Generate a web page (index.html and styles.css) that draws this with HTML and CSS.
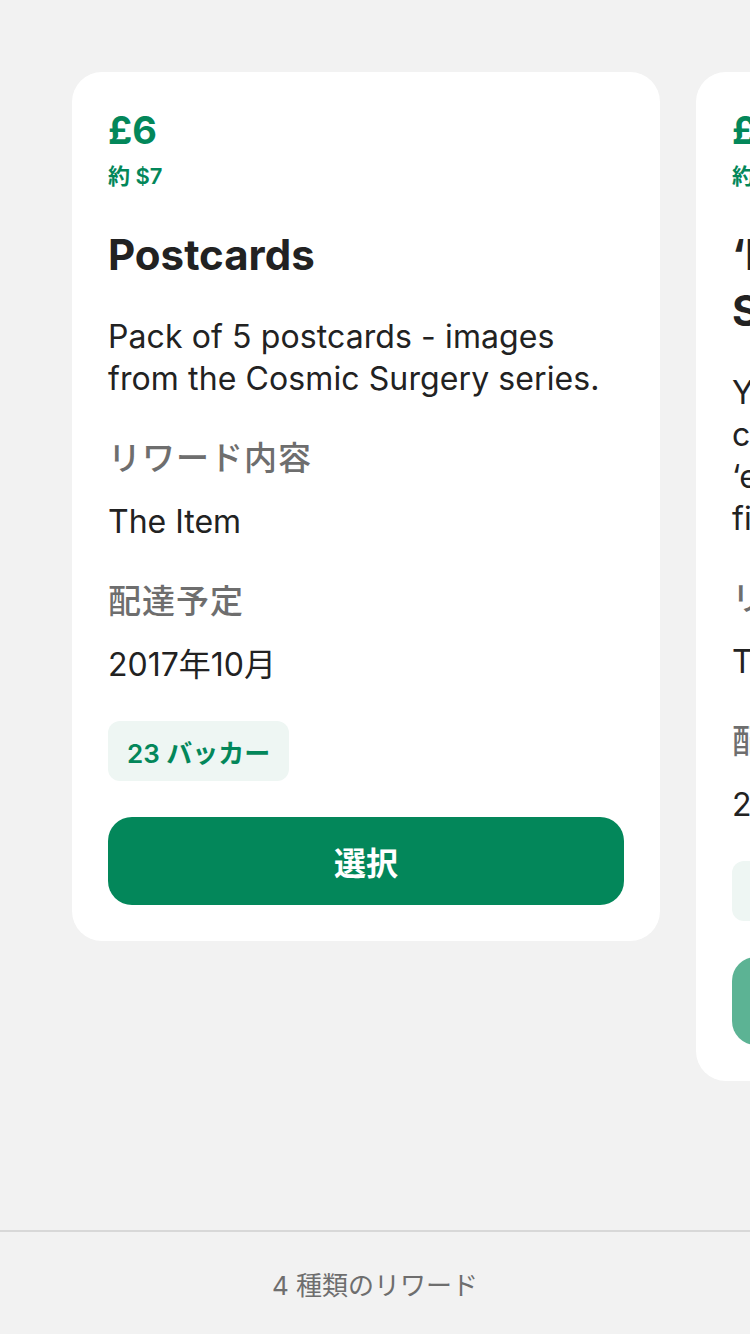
FILE: index.html
```html
<!DOCTYPE html>
<html lang="ja">
<head>
<meta charset="utf-8">
<title>Rewards</title>
<link rel="stylesheet" href="styles.css">
</head>
<body>
<main class="carousel">
  <section class="card">
    <div class="price">£6</div>
    <div class="approx">約 $7</div>
    <h2 class="title">Postcards</h2>
    <p class="desc">Pack of 5 postcards - images from the Cosmic Surgery series.</p>
    <div class="block">
      <div class="label">リワード内容</div>
      <div class="value">The Item</div>
    </div>
    <div class="block">
      <div class="label">配達予定</div>
      <div class="value">2017年10月</div>
    </div>
    <div class="badge">23 バッカー</div>
    <button class="select">選択</button>
  </section>
  <section class="card">
    <div class="price">£25</div>
    <div class="approx">約 $31</div>
    <h2 class="title">‘Inner Space’ Art Print Signed Set</h2>
    <p class="desc">You will get a signed book, a complete postcard pack and our ‘extra special’ thank you on the final page.</p>
    <div class="block">
      <div class="label">リワード内容</div>
      <div class="value">The Item</div>
    </div>
    <div class="block">
      <div class="label">配達予定</div>
      <div class="value">2017年10月</div>
    </div>
    <div class="badge">12 バッカー</div>
    <button class="select disabled">選択</button>
  </section>
</main>
<footer class="footer">4 種類のリワード</footer>
</body>
</html>
```
FILE: styles.css
```css
* { box-sizing: border-box; }
html, body { margin: 0; padding: 0; }
body {
  width: 750px;
  height: 1334px;
  overflow: hidden;
  background: #f2f2f2;
  font-family: Inter, "Noto Sans CJK JP", sans-serif;
  color: #222222;
  display: flex;
  flex-direction: column;
}
.carousel {
  flex: 1;
  display: flex;
  align-items: flex-start;
  gap: 36px;
  padding: 72px 0 0 72px;
  overflow: hidden;
}
.card {
  flex: none;
  width: 588px;
  background: #ffffff;
  border-radius: 30px;
  padding: 36px;
  display: flex;
  flex-direction: column;
  align-items: flex-start;
}
.price {
  font-size: 38px;
  line-height: 44px;
  font-weight: 700;
  color: #03875a;
}
.approx {
  margin-top: 10px;
  font-size: 22px;
  line-height: 28px;
  font-weight: 600;
  color: #03875a;
}
.title {
  margin: 37px 0 0;
  font-size: 42px;
  line-height: 56px;
  font-weight: 700;
  color: #222222;
}
.desc {
  margin: 33px 0 0;
  font-size: 32px;
  line-height: 42px;
  letter-spacing: 0.1px;
}
.block { margin-top: 37px; }
.label {
  font-size: 33px;
  line-height: 42px;
  font-weight: 500;
  letter-spacing: 1px;
  color: #6e6e6e;
}
.value {
  margin-top: 22px;
  font-size: 32px;
  line-height: 42px;
}
.badge {
  margin-top: 35px;
  height: 60px;
  padding: 0 19px;
  display: flex;
  align-items: center;
  background: #eef6f3;
  border-radius: 12px;
  font-size: 26px;
  font-weight: 600;
  color: #03875a;
}
.select {
  margin-top: 36px;
  width: 100%;
  height: 88px;
  border: 0;
  border-radius: 24px;
  background: #03875a;
  color: #ffffff;
  font-family: inherit;
  font-size: 32px;
  font-weight: 700;
}
.select.disabled { background: #5cb394; }
.footer {
  flex: none;
  height: 104px;
  border-top: 2px solid #d8d8d8;
  display: flex;
  align-items: center;
  justify-content: center;
  font-size: 26px;
  color: #6e6e6e;
}
```
